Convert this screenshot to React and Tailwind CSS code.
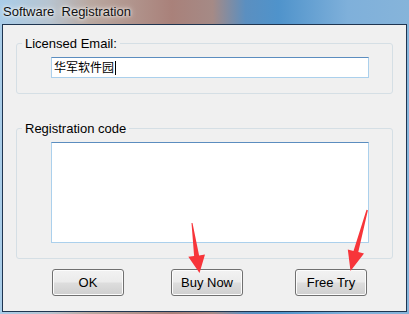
const ui = { fontFamily: '"Liberation Sans", Arial, "Noto Sans CJK SC", sans-serif' };

const Button = ({ children }) => (
    <button
        className="w-[72px] h-[27px] rounded-[3px] border border-[#707070] bg-[linear-gradient(180deg,#f2f2f2_0%,#ebebeb_48%,#dddddd_52%,#cfcfcf_100%)] shadow-[inset_0_0_0_1px_#fcfcfc] text-[13px] text-black"
    >
        {children}
    </button>
);

const Arrows = () => (
    <svg className="absolute inset-0 pointer-events-none" width="409" height="314" viewBox="0 0 409 314">
        <polygon
            fill="#f7353a"
            points="192.5,222.9 199.1,255.4 205,254.6 199.5,273 188.3,256.8 194.1,256 191.5,223.1"
        />
        <polygon
            fill="#f7353a"
            points="367.9,210.2 358.3,252.1 364,253.6 350.5,271 347.8,249.4 353.5,250.9 366.5,209.8"
        />
    </svg>
);

export default function App() {
    return (
        <div
            className="relative w-[409px] h-[314px] overflow-hidden flex flex-col bg-[linear-gradient(90deg,#a9cde9_0%,#b7c4d0_12%,#b9a8a0_22%,#a9817a_42%,#a58a86_52%,#5b8fc0_60%,#4f93cb_68%,#7fb0da_85%,#86b4da_100%)]"
            style={ui}
        >
            {/* title bar */}
            <div className="h-[24px] shrink-0 px-[3px] flex items-center">
                <span className="whitespace-pre text-[13px] text-[#111] [text-shadow:0_0_6px_#ffffff,0_0_3px_#ffffff]">
                    Software  Registration
                </span>
            </div>

            {/* client area */}
            <div className="mx-[2px] h-[288px] border border-[#1f3550] bg-[#f0f0f0] flex flex-col">
                <fieldset className="mt-[11px] mx-[13px] h-[58px] border border-[#d5dfe5] rounded-[3px] p-0">
                    <legend className="ml-[5px] px-[3px] text-[13px] leading-[15px] text-black">Licensed Email:</legend>
                    <div className="ml-[34px] mt-[6px] h-[21px] w-[318px] bg-white border border-[#abd0ec] border-t-[#5b8dbf] flex items-center px-[2px]">
                        <span className="text-[12px] text-black leading-none">华军软件园</span>
                        <span className="ml-px w-px h-[14px] bg-black" />
                    </div>
                </fieldset>

                <fieldset className="mt-[27px] mx-[13px] h-[138px] border border-[#d5dfe5] rounded-[3px] p-0">
                    <legend className="ml-[5px] px-[3px] text-[13px] leading-[15px] text-black">Registration code</legend>
                    <div className="ml-[34px] mt-[6px] h-[101px] w-[318px] bg-white border border-[#abd0ec] border-t-[#5b8dbf]" />
                </fieldset>

                <div className="mt-[10px] flex pl-[49px]">
                    <Button>OK</Button>
                    <div className="ml-[47px]">
                        <Button>Buy Now</Button>
                    </div>
                    <div className="ml-[52px]">
                        <Button>Free Try</Button>
                    </div>
                </div>
            </div>

            <Arrows />
        </div>
    );
}
